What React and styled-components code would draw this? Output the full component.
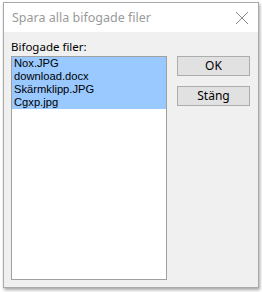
import React from "react";
import styled, { createGlobalStyle } from "styled-components";

const GlobalStyle = createGlobalStyle`
  html, body {
    margin: 0;
    padding: 0;
    background: #ffffff;
  }
  body {
    width: 262px;
    height: 292px;
    overflow: hidden;
    font-family: "Noto Sans", "Segoe UI", sans-serif;
  }
`;

const Win = styled.div`
  box-sizing: border-box;
  margin: 2px 0 0 3px;
  width: 256px;
  height: 286px;
  border: 1px solid #a9a9a9;
  background: #f0f0f0;
  display: flex;
  flex-direction: column;
  box-shadow: 1px 2px 3px rgba(0, 0, 0, 0.35);
`;

const TitleBar = styled.div`
  height: 29px;
  background: #ffffff;
  display: flex;
  align-items: center;
  justify-content: space-between;
  padding: 0 8px 0 8px;
  color: #9a9a9a;
  font-size: 12.5px;
`;

const Close = styled.div`
  width: 16px;
  height: 16px;
  display: flex;
  align-items: center;
  justify-content: center;
`;

const Body = styled.div`
  flex: 1;
  display: flex;
  padding: 7px 6px 6px 7px;
  gap: 10px;
`;

const Column = styled.div`
  display: flex;
  flex-direction: column;
  width: 156px;
`;

const Label = styled.div`
  font-size: 11.5px;
  color: #000;
  height: 16px;
  line-height: 16px;
  margin-bottom: 1px;
`;

const ListBox = styled.div`
  box-sizing: border-box;
  height: 224px;
  border: 1px solid #a0a0a0;
  background: #fff;
  padding: 0;
`;

const Item = styled.div`
  height: 13px;
  line-height: 13px;
  font-family: "Liberation Sans", Arial, sans-serif;
  font-size: 11.2px;
  padding-left: 2px;
  background: ${(p) => (p.$selected ? "#99c9ff" : "transparent")};
  color: #000;
`;

const Buttons = styled.div`
  display: flex;
  flex-direction: column;
  gap: 10px;
  padding-top: 17px;
`;

const Button = styled.button`
  box-sizing: border-box;
  width: 73px;
  height: 20px;
  border: 1px solid #adadad;
  background: #e1e1e1;
  font-family: "Noto Sans", "Segoe UI", sans-serif;
  font-size: 12px;
  color: #000;
  padding: 0;
  line-height: 16px;
`;

const files = ["Nox.JPG", "download.docx", "Skärmklipp.JPG", "Cgxp.jpg"];

export default function App() {
  return (
    <>
      <GlobalStyle />
      <Win>
        <TitleBar>
          <span>Spara alla bifogade filer</span>
          <Close>
            <svg width="14" height="14" viewBox="0 0 14 14">
              <path d="M1 1 L13 13 M13 1 L1 13" stroke="#8a8a8a" strokeWidth="1" />
            </svg>
          </Close>
        </TitleBar>
        <Body>
          <Column>
            <Label>Bifogade filer:</Label>
            <ListBox>
              {files.map((f) => (
                <Item key={f} $selected>
                  {f}
                </Item>
              ))}
            </ListBox>
          </Column>
          <Buttons>
            <Button>OK</Button>
            <Button>Stäng</Button>
          </Buttons>
        </Body>
      </Win>
    </>
  );
}
